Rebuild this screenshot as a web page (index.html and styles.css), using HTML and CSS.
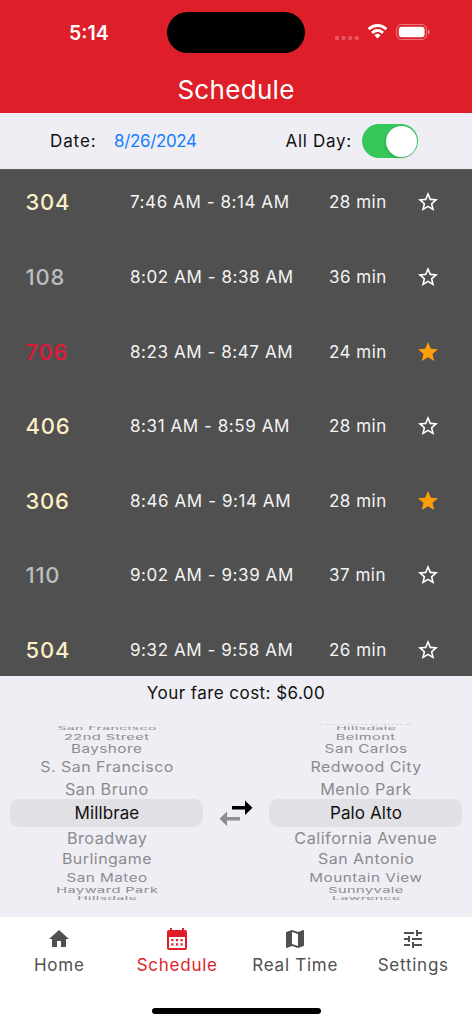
FILE: index.html
```
<!DOCTYPE html>
<html lang="en">
  <head>
    <meta charset="utf-8" />
    <meta name="viewport" content="width=device-width, initial-scale=1.0" />
    <title>Schedule</title>
    <link rel="stylesheet" href="styles.css">
  </head>
  <body>
    <!-- icons used more than once -->
    <svg class="defs">
      <symbol id="star" viewBox="0 0 24 24">
        <path d="M12 17.27L18.18 21l-1.64-7.03L22 9.24l-7.19-.61L12 2 9.19 8.63 2 9.24l5.46 4.73L5.82 21z"/>
      </symbol>
      <symbol id="star-outline" viewBox="0 0 24 24">
        <path d="M22 9.24l-7.19-.62L12 2 9.19 8.63 2 9.24l5.46 4.73L5.82 21 12 17.27 18.18 21l-1.63-7.03L22 9.24zM12 15.4l-3.76 2.27 1-4.28-3.32-2.88 4.38-.38L12 6.1l1.71 4.04 4.38.38-3.32 2.88 1 4.28L12 15.4z"/>
      </symbol>
    </svg>

    <header class="header">
      <div class="status">
        <span class="clock">5:14</span>
        <span class="island"></span>
        <div class="status-icons">
          <svg class="dots" width="24" height="4" viewBox="0 0 24 4">
            <rect x="0" width="4" height="4" rx="1.3"/><rect x="6.6" width="4" height="4" rx="1.3"/><rect x="13.2" width="4" height="4" rx="1.3"/><rect x="19.8" width="4" height="4" rx="1.3"/>
          </svg>
          <svg class="wifi" width="21" height="16" viewBox="0 0 21 16">
            <path d="M10.5 3.1c2.9 0 5.5 1.1 7.5 3 .15.15.4.15.55 0l1.5-1.5c.17-.17.17-.42 0-.58A13.8 13.8 0 0 0 10.5 0 13.8 13.8 0 0 0 .95 4.02c-.17.16-.17.41 0 .58l1.5 1.5c.15.15.4.15.55 0a10.9 10.9 0 0 1 7.5-3z"/>
            <path d="M10.5 8.1c1.6 0 3 .6 4.1 1.55.17.15.4.15.56 0l1.5-1.5c.17-.17.17-.43 0-.6a8.95 8.95 0 0 0-12.32 0c-.17.17-.17.43 0 .6l1.5 1.5c.16.15.4.15.56 0a6.2 6.2 0 0 1 4.1-1.55z"/>
            <path d="M13.3 11.6c.17-.16.16-.44-.02-.6a4.3 4.3 0 0 0-5.56 0c-.18.16-.19.44-.02.6l2.52 2.55c.16.16.4.16.56 0z"/>
          </svg>
          <svg class="battery" width="34" height="16" viewBox="0 0 34 16">
            <rect class="battery-frame" x=".6" y=".5" width="30" height="15" rx="5"/>
            <rect x="2.8" y="2.7" width="25.8" height="10.6" rx="3"/>
            <path class="battery-tip" d="M32 5.5v5c1-.4 1.7-1.4 1.7-2.5S33 5.900 32 5.500z"/>
          </svg>
        </div>
      </div>
      <h1 class="title">Schedule</h1>
    </header>

    <section class="filters">
      <span class="label">Date:</span>
      <span class="date">8/26/2024</span>
      <span class="label all-day">All Day:</span>
      <span class="switch"><span class="knob"></span></span>
    </section>

    <main class="trains">
      <div class="train">
        <span class="number limited">304</span>
        <span class="time">7:46 AM - 8:14 AM</span>
        <span class="duration">28 min</span>
        <svg class="star"><use href="#star-outline"/></svg>
      </div>
      <div class="train">
        <span class="number local">108</span>
        <span class="time">8:02 AM - 8:38 AM</span>
        <span class="duration">36 min</span>
        <svg class="star"><use href="#star-outline"/></svg>
      </div>
      <div class="train">
        <span class="number bullet">706</span>
        <span class="time">8:23 AM - 8:47 AM</span>
        <span class="duration">24 min</span>
        <svg class="star saved"><use href="#star"/></svg>
      </div>
      <div class="train">
        <span class="number limited">406</span>
        <span class="time">8:31 AM - 8:59 AM</span>
        <span class="duration">28 min</span>
        <svg class="star"><use href="#star-outline"/></svg>
      </div>
      <div class="train">
        <span class="number limited">306</span>
        <span class="time">8:46 AM - 9:14 AM</span>
        <span class="duration">28 min</span>
        <svg class="star saved"><use href="#star"/></svg>
      </div>
      <div class="train">
        <span class="number local">110</span>
        <span class="time">9:02 AM - 9:39 AM</span>
        <span class="duration">37 min</span>
        <svg class="star"><use href="#star-outline"/></svg>
      </div>
      <div class="train">
        <span class="number limited">504</span>
        <span class="time">9:32 AM - 9:58 AM</span>
        <span class="duration">26 min</span>
        <svg class="star"><use href="#star-outline"/></svg>
      </div>
    </main>

    <section class="trip">
      <p class="fare">Your fare cost: $6.00</p>
      <div class="pickers">
        <ul class="wheel">
          <li class="far-5"><span>San Francisco</span></li>
          <li class="far-4"><span>22nd Street</span></li>
          <li class="far-3"><span>Bayshore</span></li>
          <li class="far-2"><span>S. San Francisco</span></li>
          <li class="far-1"><span>San Bruno</span></li>
          <li class="selected"><span>Millbrae</span></li>
          <li class="far-1"><span>Broadway</span></li>
          <li class="far-2"><span>Burlingame</span></li>
          <li class="far-3"><span>San Mateo</span></li>
          <li class="far-4"><span>Hayward Park</span></li>
          <li class="far-5"><span>Hillsdale</span></li>
        </ul>
        <svg class="swap" width="34" height="26" viewBox="0 0 34 26">
          <path d="M13 6h13V.5l7.5 7.2L26 15V9.5H13z"/>
          <path class="back" d="M21 17H8v-5.5L.5 18.7 8 26v-5.5h13z"/>
        </svg>
        <ul class="wheel">
          <li class="far-6"><span>Hayward Park</span></li>
          <li class="far-5"><span>Hillsdale</span></li>
          <li class="far-4"><span>Belmont</span></li>
          <li class="far-3"><span>San Carlos</span></li>
          <li class="far-2"><span>Redwood City</span></li>
          <li class="far-1"><span>Menlo Park</span></li>
          <li class="selected"><span>Palo Alto</span></li>
          <li class="far-1"><span>California Avenue</span></li>
          <li class="far-2"><span>San Antonio</span></li>
          <li class="far-3"><span>Mountain View</span></li>
          <li class="far-4"><span>Sunnyvale</span></li>
          <li class="far-5"><span>Lawrence</span></li>
        </ul>
      </div>
    </section>

    <nav class="tabs">
      <a class="tab">
        <svg class="tab-icon" viewBox="0 0 24 24"><path d="M10 20v-6h4v6h5v-8h3L12 3 2 12h3v8z"/></svg>
        <span>Home</span>
      </a>
      <a class="tab active">
        <svg class="tab-icon" viewBox="0 0 24 24"><path fill-rule="evenodd" d="M20 3h-1V1h-2v2H7V1H5v2H4a2 2 0 0 0-2 2v16a2 2 0 0 0 2 2h16a2 2 0 0 0 2-2V5a2 2 0 0 0-2-2zM4 10h16v11H4zM6.3 12h2.2v2.200H6.300zm4.600 0h2.200v2.200h-2.200zm4.600 0h2.200v2.200h-2.200zM6.300 16.300h2.200v2.200H6.300zm4.600 0h2.200v2.200h-2.200zm4.600 0h2.200v2.200h-2.200z"/></svg>
        <span>Schedule</span>
      </a>
      <a class="tab">
        <svg class="tab-icon" viewBox="0 0 24 24"><path d="M20.5 3l-.16.03L15 5.1 9 3 3.36 4.9c-.21.07-.36.25-.36.48V20.5c0 .28.22.5.5.5l.16-.03L9 18.9l6 2.1 5.64-1.9c.21-.07.36-.25.36-.48V3.5c0-.28-.22-.5-.5-.5zM15 19l-6-2.11V5l6 2.11V19z"/></svg>
        <span>Real Time</span>
      </a>
      <a class="tab">
        <svg class="tab-icon" viewBox="0 0 24 24"><path d="M3 17v2h6v-2H3zM3 5v2h10V5H3zm10 16v-2h8v-2h-8v-2h-2v6h2zM7 9v2H3v2h4v2h2V9H7zm14 4v-2H11v2h10zm-6-4h2V7h4V5h-4V3h-2v6z"/></svg>
        <span>Settings</span>
      </a>
    </nav>
    <div class="home-indicator"></div>
  </body>
</html>
```

FILE: styles.css
```
* {
    box-sizing: border-box;
}

body {
    margin: 0;
    width: 472px;
    height: 1024px;
    overflow: hidden;
    display: flex;
    flex-direction: column;
    background: #fff;
    color: #111;
    font-family: Inter, "Liberation Sans", sans-serif;
    font-size: 17px;
    white-space: nowrap;
}

.defs {
    display: none;
}

/* header */

.header {
    height: 113px;
    background: #de1f2a;
    color: #fff;
}

.status {
    display: grid;
    grid-template-columns: 167px 138px 1fr;
    padding-top: 12px;
    height: 65px;
}

.clock {
    padding: 9px 0 0 69px;
    font-size: 19.5px;
    font-weight: 600;
    line-height: 24px;
}

.island {
    height: 41px;
    border-radius: 21px;
    background: #000;
}

.status-icons {
    display: flex;
    padding: 12px 0 0 30px;
    fill: #fff;
}

.dots {
    margin: 11.5px 8px 0 0;
    opacity: 0.25;
}

.wifi {
    margin-right: 8px;
}

.battery-frame {
    fill: none;
    stroke: #fff;
    stroke-opacity: 0.4;
}

.battery-tip {
    opacity: 0.45;
}

.title {
    margin: 9px 0 0;
    font-size: 26px;
    font-weight: 400;
    line-height: 32px;
    letter-spacing: 0.3px;
    text-align: center;
}

/* date and all day */

.filters {
    display: flex;
    align-items: center;
    height: 56px;
    padding-left: 50px;
    background: #efeef4;
}

.label {
    width: 64px;
    letter-spacing: 0.9px;
}

.date {
    width: 171.5px;
    color: #147efb;
    letter-spacing: -0.35px;
}

.all-day {
    width: 76.5px;
    letter-spacing: 0.7px;
}

.switch {
    width: 56px;
    height: 34px;
    padding: 2px;
    border-radius: 17px;
    background: #35c759;
}

.knob {
    display: block;
    width: 31px;
    height: 31px;
    margin: -0.5px 0 0 21.5px;
    border-radius: 50%;
    background: #fff;
    box-shadow: -1px 1px 3px rgba(0, 0, 0, 0.15);
}

/* train list */

.trains {
    height: 507px;
    overflow: hidden;
    background: #505050;
    border-top: 1px solid #5e5e60;
    color: #f4f4f4;
}

.train {
    display: grid;
    grid-template-columns: 104.5px 199px 87px 24px;
    align-items: center;
    height: 74.6px;
    padding: 0 0 9.7px 25.5px;
}

.number {
    font-size: 22px;
    font-weight: 500;
    letter-spacing: 0.8px;
}

.limited {
    color: #feeec6;
}

.local {
    color: #bdbdbd;
}

.bullet {
    color: #e31837;
}

.time {
    letter-spacing: 0.57px;
}

.duration {
    letter-spacing: 0.5px;
}

.star {
    width: 24px;
    height: 24px;
    fill: #fff;
}

.saved {
    fill: #ff9d0a;
}

/* fare and station wheels */

.trip {
    height: 241px;
    background: #efeef4;
}

.fare {
    margin: 0;
    padding-top: 5px;
    line-height: 24px;
    letter-spacing: 0.45px;
    text-align: center;
}

.pickers {
    display: flex;
    align-items: flex-end;
    justify-content: space-between;
    height: 197px;
    padding: 0 10px;
}

.wheel {
    width: 193px;
    margin: 0;
    padding: 0;
    list-style: none;
    color: #8b8b8f;
    text-align: center;
    letter-spacing: 0.5px;
}

.wheel li {
    display: flex;
    align-items: center;
    justify-content: center;
    padding-left: 1px;
}

.wheel .selected {
    height: 28px;
    border-radius: 9px;
    background: #e1e0e5;
    color: #111;
    letter-spacing: 0.1px;
}

/* names get flatter and narrower as the wheel turns away */

.far-1 {
    height: 20.6px;
}

.far-1 span {
    transform: scale(0.955, 0.96);
}

.far-2 {
    height: 22.8px;
}

.far-2 span {
    transform: scale(0.94, 0.84);
}

.far-3 {
    height: 14.2px;
}

.far-3 span {
    transform: scale(0.9, 0.67);
}

.far-4 {
    height: 9.8px;
}

.far-4 span {
    transform: scale(0.86, 0.45);
}

.far-5 {
    height: 7.2px;
}

.far-5 span {
    transform: translateY(0.7px) scale(0.83, 0.25);
}

.far-6 {
    height: 0;
}

.far-6 span {
    opacity: 0.4;
    transform: scale(0.78, 0.06);
}

.swap {
    margin-bottom: 76px;
}

.swap .back {
    fill: #8e8e90;
}

/* bottom tabs */

.tabs {
    display: grid;
    grid-template-columns: repeat(4, 1fr);
    height: 91px;
    padding-top: 10px;
}

.tab {
    display: flex;
    flex-direction: column;
    align-items: center;
    color: #505050;
    line-height: 24px;
    letter-spacing: 0.75px;
}

.tab span {
    padding-left: 0.5px;
}

.tab-icon {
    width: 24px;
    height: 24px;
    margin-bottom: 2px;
    fill: currentColor;
}

.active {
    color: #de1f2a;
}

.home-indicator {
    width: 169px;
    height: 6px;
    margin: 0 auto;
    border-radius: 3px;
    background: #000;
}
```
